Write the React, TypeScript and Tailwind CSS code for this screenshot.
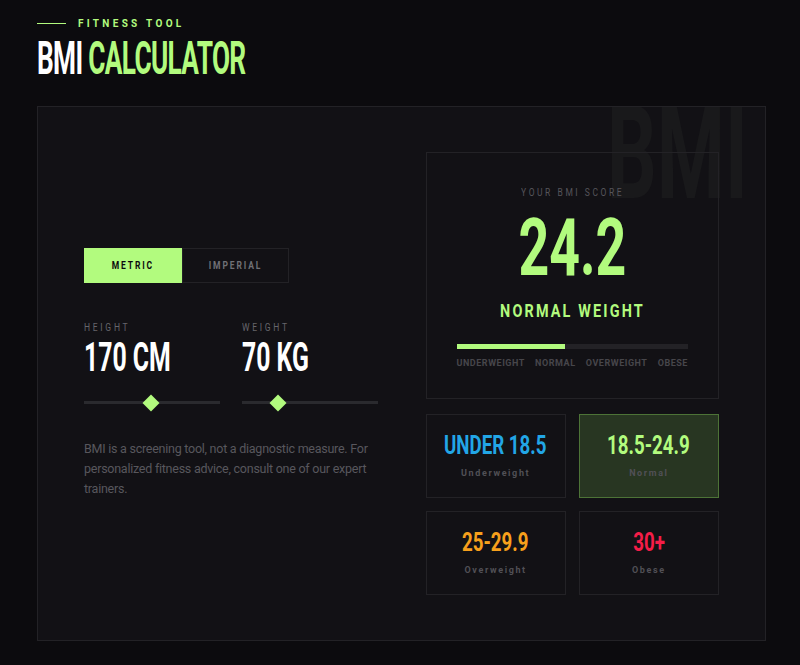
import { useState } from "react";

const ranges = [
  { value: "UNDER 18.5", label: "Underweight", color: "text-[#22a6e6]", active: false },
  { value: "18.5-24.9", label: "Normal", color: "text-[#b2fb7e]", active: true },
  { value: "25-29.9", label: "Overweight", color: "text-[#f7a01c]", active: false },
  { value: "30+", label: "Obese", color: "text-[#f51d48]", active: false },
];

function Slider({ pct }: { pct: number }) {
  return (
    <div className="relative mt-[22px] h-[3px] w-full bg-[#2a2a2e]">
      <div
        className="absolute top-1/2 h-[12px] w-[12px] -translate-x-1/2 -translate-y-1/2 rotate-45 bg-[#b2fb7e]"
        style={{ left: `${pct}%` }}
      />
    </div>
  );
}

export default function App() {
  const [unit, setUnit] = useState<"metric" | "imperial">("metric");

  const tab = (active: boolean) =>
    `h-[35px] text-[10px] font-bold tracking-[0.22em] ${
      active ? "bg-[#b2fb7e] text-[#0c0b0e]" : "border border-[#232226] text-[#707075]"
    }`;

  return (
    <div className="min-h-[665px] w-full bg-[#0c0b0e] pl-[37px] pr-[34px] pt-[16px] font-['Roboto',sans-serif]">
      {/* header */}
      <div className="flex items-center gap-3">
        <div className="h-px w-[29px] bg-[#b2fb7e]" />
        <span className="text-[10px] font-bold tracking-[0.33em] text-[#b2fb7e]">FITNESS TOOL</span>
      </div>
      <h1 className="mt-[4px] whitespace-nowrap text-[46px] font-bold leading-[46px] text-white">
        <span className="inline-block origin-left scale-x-[0.57] tracking-tight">
          BMI <span className="text-[#b2fb7e]">CALCULATOR</span>
        </span>
      </h1>

      {/* panel */}
      <div className="relative mt-[25px] h-[535px] overflow-hidden border border-[#232226] bg-[#121115]">
        <div className="pointer-events-none absolute right-[-30px] top-[-28px] select-none text-[130px] font-bold leading-[150px] text-[#19191b]">
          <span className="inline-block origin-center scale-x-[0.6]">BMI</span>
        </div>

        <div className="relative grid h-full grid-cols-2 items-center gap-12 px-[46px]">
          {/* left */}
          <div>
            <div className="flex w-[205px]">
              <button onClick={() => setUnit("metric")} className={`${tab(unit === "metric")} w-[98px]`}>
                <span className="inline-block scale-x-[0.85]">METRIC</span>
              </button>
              <button onClick={() => setUnit("imperial")} className={`${tab(unit === "imperial")} flex-1`}>
                <span className="inline-block scale-x-[0.85]">IMPERIAL</span>
              </button>
            </div>

            <div className="mt-[37px] grid grid-cols-2 gap-[22px]">
              <div>
                <div className="text-[10px] tracking-[0.32em] text-[#66656b]">
                  <span className="inline-block origin-left scale-x-[0.85]">HEIGHT</span>
                </div>
                <div className="mt-[2px] whitespace-nowrap text-[40px] font-bold leading-[42px] text-white">
                  <span className="inline-block origin-left scale-x-[0.62]">170 CM</span>
                </div>
                <Slider pct={49} />
              </div>
              <div>
                <div className="text-[10px] tracking-[0.32em] text-[#66656b]">
                  <span className="inline-block origin-left scale-x-[0.85]">WEIGHT</span>
                </div>
                <div className="mt-[2px] whitespace-nowrap text-[40px] font-bold leading-[42px] text-white">
                  <span className="inline-block origin-left scale-x-[0.62]">70 KG</span>
                </div>
                <Slider pct={27} />
              </div>
            </div>

            <p className="mt-[35px] text-[12.5px] leading-[20px] tracking-[-0.25px] text-[#58575d]">
              BMI is a screening tool, not a diagnostic measure. For personalized fitness advice, consult one of our expert trainers.
            </p>
          </div>

          {/* right */}
          <div>
            <div className="flex h-[247px] flex-col items-center border border-[#232226] px-[30px] pt-[32px]">
              <div className="whitespace-nowrap text-[10px] tracking-[0.3em] text-[#56555b]">
                <span className="inline-block scale-x-[0.85]">YOUR BMI SCORE</span>
              </div>
              <div className="mt-[8px] whitespace-nowrap text-[80px] font-bold leading-[80px] text-[#b2fb7e]">
                <span className="inline-block scale-x-[0.67]">24.2</span>
              </div>
              <div className="mt-[9px] whitespace-nowrap text-[18px] font-bold tracking-[0.15em] text-[#b2fb7e]">
                <span className="inline-block scale-x-[0.8]">NORMAL WEIGHT</span>
              </div>
              <div className="mt-[20px] flex h-[5px] w-full bg-[#232226]">
                <div className="h-full w-[47%] bg-[#b2fb7e]" />
              </div>
              <div className="mt-[8px] flex w-full justify-between text-[9px] font-bold tracking-[0.06em] text-[#47464b]">
                <span>UNDERWEIGHT</span>
                <span>NORMAL</span>
                <span>OVERWEIGHT</span>
                <span>OBESE</span>
              </div>
            </div>

            <div className="mt-[15px] grid grid-cols-2 gap-[13px]">
              {ranges.map((r) => (
                <div
                  key={r.label}
                  className={`flex h-[84px] flex-col items-center justify-center border ${
                    r.active ? "border-[#4d7337] bg-[#283622]" : "border-[#232226]"
                  }`}
                >
                  <div className={`whitespace-nowrap text-[26px] font-bold leading-[28px] ${r.color}`}>
                    <span className="inline-block scale-x-[0.72]">{r.value}</span>
                  </div>
                  <div className="mt-[8px] text-[9px] font-bold tracking-[0.18em] text-[#515056]">{r.label}</div>
                </div>
              ))}
            </div>
          </div>
        </div>
      </div>
    </div>
  );
}
